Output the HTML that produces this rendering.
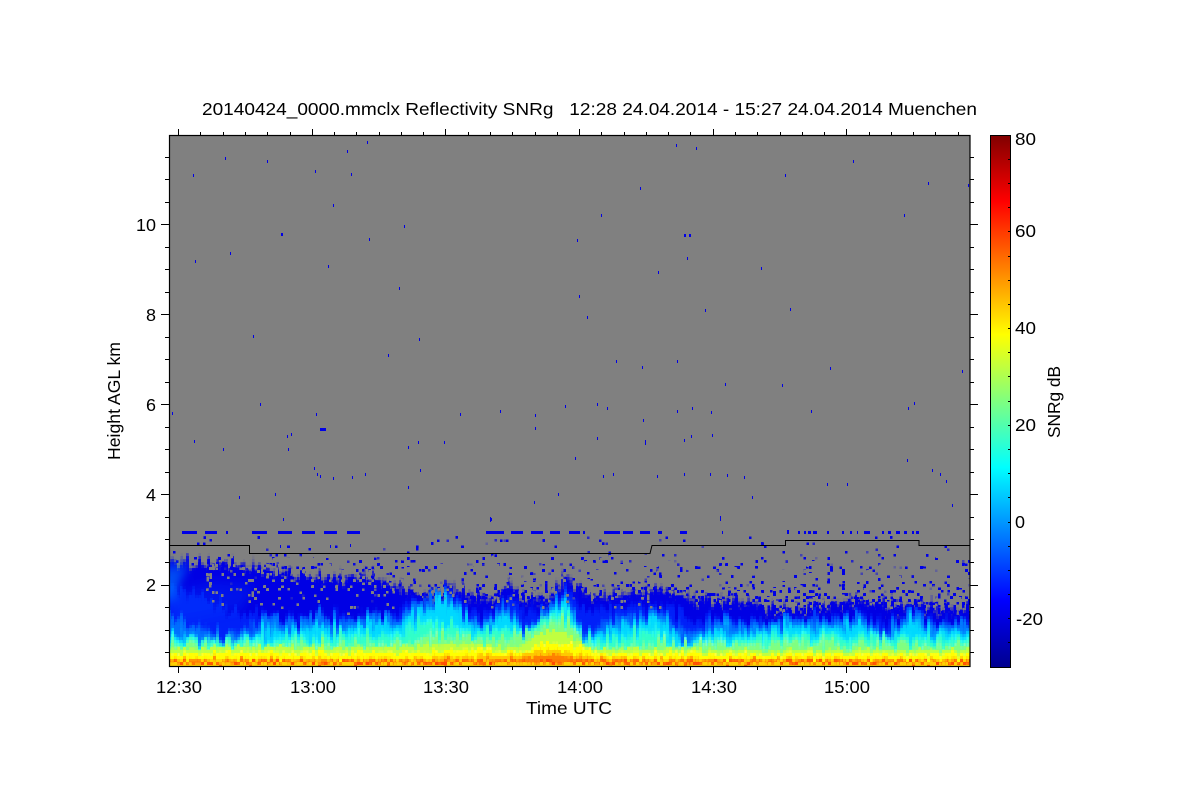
<!DOCTYPE html>
<html><head><meta charset="utf-8"><title>SNRg</title>
<style>
html,body{margin:0;padding:0;background:#fff;width:1200px;height:800px;overflow:hidden}
svg{display:block}
text{font-family:"Liberation Sans",Arial,sans-serif;font-size:17.5px;fill:#000;white-space:pre}
</style></head><body>
<svg width="1200" height="800" viewBox="0 0 1200 800" xmlns="http://www.w3.org/2000/svg">
<defs>
<clipPath id="plot"><rect x="170" y="135" width="800" height="531"/></clipPath>
<linearGradient id="jet" x1="0" y1="667" x2="0" y2="135" gradientUnits="userSpaceOnUse">
<stop offset="0" stop-color="#00008f"/><stop offset=".125" stop-color="#0000ff"/><stop offset=".375" stop-color="#00ffff"/><stop offset=".625" stop-color="#ffff00"/><stop offset=".875" stop-color="#ff0000"/><stop offset="1" stop-color="#800000"/>
</linearGradient>
<linearGradient id="spk" x1="0" y1="535" x2="0" y2="612" gradientUnits="userSpaceOnUse">
<stop offset="0" stop-color="#000" stop-opacity=".23"/><stop offset=".3" stop-color="#000" stop-opacity=".28"/><stop offset=".65" stop-color="#000" stop-opacity=".33"/><stop offset="1" stop-color="#000" stop-opacity=".46"/>
</linearGradient>
<linearGradient id="hole" x1="0" y1="555" x2="0" y2="615" gradientUnits="userSpaceOnUse">
<stop offset="0" stop-color="#000" stop-opacity=".38"/><stop offset=".6" stop-color="#000" stop-opacity=".33"/><stop offset="1" stop-color="#000" stop-opacity=".2"/>
</linearGradient>
<filter id="upper" filterUnits="userSpaceOnUse" x="150" y="535" width="840" height="160" color-interpolation-filters="sRGB">
<feGaussianBlur in="SourceGraphic" stdDeviation="1 2" result="b"/>
<feTurbulence type="fractalNoise" baseFrequency=".36 .035" numOctaves="2" seed="7"/>
<feColorMatrix values="0 0 0 0 .5  0 1.7 0 0 -.35  0 0 0 0 0  0 0 0 0 1" result="n"/>
<feDisplacementMap in="b" in2="n" scale="20" xChannelSelector="R" yChannelSelector="G" result="d"/>
<feFlood x="151" y="536" width="1" height="1" flood-color="#000"/>
<feComposite x="150" y="535" width="3" height="3"/>
<feTile result="t"/>
<feComposite in="d" in2="t" operator="in"/>
<feMorphology operator="dilate" radius="1"/>
</filter>
<filter id="lower" filterUnits="userSpaceOnUse" x="150" y="620" width="840" height="75" color-interpolation-filters="sRGB">
<feGaussianBlur in="SourceGraphic" stdDeviation="1 .6" result="b"/>
<feTurbulence type="fractalNoise" baseFrequency=".3 .05" numOctaves="2" seed="12"/>
<feColorMatrix values="0 0 0 0 .5  0 2 0 0 -.5  0 0 0 0 0  0 0 0 0 1" result="n"/>
<feDisplacementMap in="b" in2="n" scale="7" xChannelSelector="R" yChannelSelector="G" result="d"/>
<feFlood x="151" y="621" width="1" height="1" flood-color="#000"/>
<feComposite x="150" y="620" width="3" height="3"/>
<feTile result="t"/>
<feComposite in="d" in2="t" operator="in"/>
<feMorphology operator="dilate" radius="1"/>
</filter>
<filter id="speck" filterUnits="userSpaceOnUse" x="170" y="536" width="800" height="80" color-interpolation-filters="sRGB">
<feTurbulence type="fractalNoise" baseFrequency=".42 .3" numOctaves="2" seed="4"/>
<feColorMatrix values="0 0 0 0 0  0 0 0 0 0  0 0 0 0 0  0 1 0 0 0" result="a"/>
<feComposite in="SourceAlpha" in2="a" operator="arithmetic" k1="0" k2="1" k3="1" k4="-1"/>
<feComponentTransfer result="m"><feFuncA type="linear" slope="60" intercept="0"/></feComponentTransfer>
<feFlood flood-color="#0000e6"/>
<feComposite in2="m" operator="in" result="c"/>
<feFlood x="171" y="537" width="1" height="1" flood-color="#000"/>
<feComposite x="170" y="536" width="3" height="3"/>
<feTile result="t"/>
<feComposite in="c" in2="t" operator="in"/>
<feMorphology operator="dilate" radius="1"/>
</filter>
<filter id="holes" filterUnits="userSpaceOnUse" x="170" y="555" width="800" height="60" color-interpolation-filters="sRGB">
<feTurbulence type="fractalNoise" baseFrequency=".42 .3" numOctaves="2" seed="21"/>
<feColorMatrix values="0 0 0 0 0  0 0 0 0 0  0 0 0 0 0  0 1 0 0 0" result="a"/>
<feComposite in="SourceAlpha" in2="a" operator="arithmetic" k1="0" k2="1" k3="1" k4="-1"/>
<feComponentTransfer result="m"><feFuncA type="linear" slope="60" intercept="0"/></feComponentTransfer>
<feFlood flood-color="#808080"/>
<feComposite in2="m" operator="in" result="c"/>
<feFlood x="171" y="556" width="1" height="1" flood-color="#000"/>
<feComposite x="170" y="555" width="3" height="3"/>
<feTile result="t"/>
<feComposite in="c" in2="t" operator="in"/>
<feMorphology operator="dilate" radius="1"/>
</filter>
<filter id="soft" filterUnits="userSpaceOnUse" x="150" y="540" width="200" height="110"><feGaussianBlur stdDeviation="4 6"/></filter>
</defs>

<rect width="1200" height="800" fill="#fff"/>
<rect x="170" y="135" width="800" height="531" fill="#808080"/>

<g clip-path="url(#plot)">
<rect x="170" y="536" width="800" height="80" fill="url(#spk)" filter="url(#speck)"/>

<g filter="url(#upper)">
<path fill="#0000e4" d="M150 562L190 564L220 562L250 566L280 573L310 577L340 579L370 576L390 582L405 592L430 597L450 586L465 594L490 602L510 582L525 600L550 599L565 578L580 592L600 599L640 592L670 591L690 600L720 602L750 604L770 610L800 609L850 602L880 607L920 607L990 612V695H150Z"/>
<path fill="#0020f8" d="M150 578L190 592L240 614L300 620L340 614L390 617L405 603L425 603L450 591L465 606L490 614L510 595L525 610L548 606L565 587L582 608L610 610L640 606L670 609L690 620L730 618L760 624L790 617L830 619L860 614L885 626L910 612L940 624L990 622V695H150Z"/>
<path fill="#0070ff" d="M150 612L200 628L225 636L250 628L270 620L300 624L320 614L340 622L370 610L395 620L420 605L440 592L455 604L470 618L490 622L505 600L525 628L545 608L565 594L585 634L610 622L640 616L660 612L685 634L720 622L760 626L790 618L830 622L860 616L885 634L910 612L930 626L990 620V695H150Z"/>
<path fill="#00d8ff" d="M150 630L200 638L220 646L240 638L270 628L300 632L320 624L340 632L370 620L395 628L420 614L440 598L455 610L470 624L490 628L505 608L525 634L545 614L565 602L585 640L610 628L640 624L660 620L685 640L720 630L760 632L790 626L830 628L860 624L885 640L910 620L930 632L990 628V695H150Z"/>
<path fill="#30ffc8" d="M150 640L300 638L345 636L400 634L430 620L470 632L500 630L530 632L545 614L568 614L585 644L650 630L680 644L760 636L850 636L990 638V695H150Z"/>
<path fill="#80ff80" d="M150 647L400 645L440 637L500 641L535 633L552 619L570 625L590 649L660 643L990 646V695H150Z"/>
</g>

<!-- lighter blue patch on the left edge -->
<g filter="url(#soft)">
<path fill="#0080ff" fill-opacity=".6" d="M160 566H190L180 580L175 600H160Z"/>
<path fill="#0040ff" fill-opacity=".28" d="M176 592L215 582L255 586L240 610L200 618L176 622Z"/>
</g>

<rect x="205" y="555" width="765" height="60" fill="url(#hole)" filter="url(#holes)"/>

<g filter="url(#lower)">
<path fill="#c0ff40" d="M150 648L400 648L450 644L520 648L540 632L565 632L590 650L990 650V695H150Z"/>
<path fill="#ffff00" d="M150 653L420 653L470 650L525 652L540 644L570 644L600 654L990 654V695H150Z"/>
<path fill="#ffc800" d="M150 658L420 658L470 656L520 654L535 650L565 650L590 656L640 658L990 658.5V695H150Z"/>
<path fill="#ff8000" d="M150 660L420 660L510 659.5L535 655L565 655L590 659.5L990 660.5V695H150Z"/>
<path fill="#ff4a00" d="M150 661L990 661V663.5H150Z"/>
<path fill="#ffd000" d="M150 663.5H990V695H150Z"/>
</g>

<!-- repeating streak band -->
<path fill="#0000e6" d="M182 531h15v3h-15zM205 531h12v3h-12zM226 531h2v3h-2zM252 531h15v3h-15zM278 531h14v3h-14zM302 531h13v3h-13zM324 531h13v3h-13zM347 531h13v3h-13zM486 531h18v3h-18zM511 531h12v3h-12zM531 531h12v3h-12zM550 531h10v3h-10zM569 531h11v3h-11zM583 531h2v3h-2zM604 531h16v3h-16zM623 531h10v3h-10zM640 531h10v3h-10zM658 531h4v3h-4zM680 531h7v3h-7zM722 531h1v3h-1zM787 530h2v4h-2zM798 531h2v3h-2zM804 531h2v3h-2zM808 531h3v3h-3zM813 531h4v3h-4zM827 531h2v3h-2zM842 531h2v3h-2zM850 531h2v3h-2zM857 531h1v3h-1zM864 531h6v3h-6zM882 531h2v3h-2zM888 531h3v3h-3zM896 531h4v3h-4zM904 531h3v3h-3zM912 531h2v3h-2zM916 531h3v3h-3z"/>

<!-- scattered noise returns -->
<path fill="#0000e6" d="M193 174h1v3h-1zM225 157h1v3h-1zM267 160h1v3h-1zM315 170h1v3h-1zM347 150h1v3h-1zM351 173h1v3h-1zM367 141h1v3h-1zM333 204h1v3h-1zM195 260h1v3h-1zM230 252h1v3h-1zM281 233h2v3h-2zM328 265h1v3h-1zM369 238h1v3h-1zM404 225h1v3h-1zM399 287h1v3h-1zM253 335h1v3h-1zM419 338h1v3h-1zM388 354h1v3h-1zM172 412h1v3h-1zM260 403h1v3h-1zM316 413h1v3h-1zM194 440h1v3h-1zM223 448h1v3h-1zM287 435h1v3h-1zM291 433h1v3h-1zM320 428h6v3h-6zM288 448h1v3h-1zM314 467h1v3h-1zM317 473h1v3h-1zM320 475h1v3h-1zM333 477h1v3h-1zM352 476h1v3h-1zM365 473h1v3h-1zM239 496h1v3h-1zM275 493h1v3h-1zM283 518h1v3h-1zM418 441h1v3h-1zM408 446h1v3h-1zM444 441h1v3h-1zM460 413h1v3h-1zM500 410h1v3h-1zM535 427h1v3h-1zM535 414h1v3h-1zM565 405h1v3h-1zM597 403h1v3h-1zM607 407h1v3h-1zM597 437h1v3h-1zM575 457h1v3h-1zM558 493h1v3h-1zM534 501h1v3h-1zM408 486h1v3h-1zM420 469h1v3h-1zM491 518h1v3h-1zM603 475h1v3h-1zM613 473h1v3h-1zM645 440h1v5h-1zM643 419h1v3h-1zM642 366h1v3h-1zM616 360h1v3h-1zM677 360h1v3h-1zM684 439h1v3h-1zM691 435h1v3h-1zM712 434h1v3h-1zM725 383h1v3h-1zM677 410h1v3h-1zM692 407h1v3h-1zM711 411h1v3h-1zM657 475h1v3h-1zM684 473h1v3h-1zM710 473h1v3h-1zM727 474h1v3h-1zM744 476h1v3h-1zM752 496h1v3h-1zM720 518h1v3h-1zM705 309h1v3h-1zM658 271h1v3h-1zM684 234h2v3h-2zM689 234h2v3h-2zM687 257h1v3h-1zM577 239h1v3h-1zM601 214h1v3h-1zM579 295h1v3h-1zM587 316h1v3h-1zM640 187h1v3h-1zM676 144h1v3h-1zM696 147h1v3h-1zM785 174h1v3h-1zM853 160h1v3h-1zM928 182h1v3h-1zM968 184h1v3h-1zM904 214h1v3h-1zM761 267h1v3h-1zM790 308h1v3h-1zM830 367h1v3h-1zM782 384h1v3h-1zM811 410h1v3h-1zM908 407h1v3h-1zM914 402h1v3h-1zM907 459h1v3h-1zM932 469h1v3h-1zM940 473h1v3h-1zM946 480h1v3h-1zM952 504h1v3h-1zM827 483h1v3h-1zM847 483h1v3h-1zM962 370h1v3h-1zM490 517h1v5h-1zM720 516h1v4h-1zM350 544h1v3h-1zM330 545h1v3h-1zM280 545h1v3h-1z"/>

<path d="M170 545.5H249.5V553.5H650L652 545.5H785.5V540.5H919V545.5H970" fill="none" stroke="#000" stroke-width="1"/>
</g>

<!-- plot frame -->
<rect x="169.5" y="135.5" width="800.5" height="531" fill="none" stroke="#000" stroke-width="1.2"/>

<!-- x ticks, bottom (major) -->
<path fill="none" stroke="#000" stroke-width="1" d="M178.5 667v6M312.5 667v6M445.5 667v6M579.5 667v6M713.5 667v6M846.5 667v6M178.5 135v-6M312.5 135v-6M445.5 135v-6M579.5 135v-6M713.5 135v-6M846.5 135v-6"/>
<!-- x ticks minor -->
<path fill="none" stroke="#000" stroke-width="1" d="M200.5 667v3M223.5 667v3M245.5 667v3M267.5 667v3M290.5 667v3M334.5 667v3M356.5 667v3M379.5 667v3M401.5 667v3M423.5 667v3M468.5 667v3M490.5 667v3M512.5 667v3M535.5 667v3M557.5 667v3M601.5 667v3M624.5 667v3M646.5 667v3M668.5 667v3M690.5 667v3M735.5 667v3M757.5 667v3M780.5 667v3M802.5 667v3M824.5 667v3M869.5 667v3M891.5 667v3M913.5 667v3M935.5 667v3M958.5 667v3M200.5 135v-3M223.5 135v-3M245.5 135v-3M267.5 135v-3M290.5 135v-3M334.5 135v-3M356.5 135v-3M379.5 135v-3M401.5 135v-3M423.5 135v-3M468.5 135v-3M490.5 135v-3M512.5 135v-3M535.5 135v-3M557.5 135v-3M601.5 135v-3M624.5 135v-3M646.5 135v-3M668.5 135v-3M690.5 135v-3M735.5 135v-3M757.5 135v-3M780.5 135v-3M802.5 135v-3M824.5 135v-3M869.5 135v-3M891.5 135v-3M913.5 135v-3M935.5 135v-3M958.5 135v-3"/>
<!-- y ticks major -->
<path fill="none" stroke="#000" stroke-width="1" d="M169 224.5h-8M169 314.5h-8M169 404.5h-8M169 494.5h-8M169 585.5h-8M970 224.5h8M970 314.5h8M970 404.5h8M970 494.5h8M970 585.5h8"/>
<!-- y ticks minor -->
<path fill="none" stroke="#000" stroke-width="1" d="M169 157.5h-4M169 179.5h-4M169 202.5h-4M169 247.5h-4M169 269.5h-4M169 292.5h-4M169 337.5h-4M169 359.5h-4M169 382.5h-4M169 427.5h-4M169 449.5h-4M169 472.5h-4M169 517.5h-4M169 539.5h-4M169 562.5h-4M169 607.5h-4M169 630.5h-4M169 652.5h-4M970 157.5h4M970 179.5h4M970 202.5h4M970 247.5h4M970 269.5h4M970 292.5h4M970 337.5h4M970 359.5h4M970 382.5h4M970 427.5h4M970 449.5h4M970 472.5h4M970 517.5h4M970 539.5h4M970 562.5h4M970 607.5h4M970 630.5h4M970 652.5h4"/>

<!-- colour bar -->
<rect x="990" y="135" width="21" height="532" fill="url(#jet)"/>
<rect x="990.5" y="135.5" width="20" height="532" fill="none" stroke="#000" stroke-width="1"/>
<path fill="none" stroke="#000" stroke-width="1" d="M1010 159.5h-2M1010 183.5h-2M1010 207.5h-2M1010 231.5h-2M1010 256.5h-2M1010 280.5h-2M1010 304.5h-2M1010 328.5h-2M1010 352.5h-2M1010 376.5h-2M1010 401.5h-2M1010 425.5h-2M1010 449.5h-2M1010 473.5h-2M1010 497.5h-2M1010 522.5h-2M1010 546.5h-2M1010 570.5h-2M1010 594.5h-2M1010 618.5h-2M1010 642.5h-2"/>

<!-- text -->
<text x="202" y="115" textLength="775" lengthAdjust="spacingAndGlyphs">20140424_0000.mmclx Reflectivity SNRg   12:28 24.04.2014 - 15:27 24.04.2014 Muenchen</text>

<text x="156" y="693" textLength="46" lengthAdjust="spacingAndGlyphs">12:30</text>
<text x="290" y="693" textLength="46" lengthAdjust="spacingAndGlyphs">13:00</text>
<text x="423" y="693" textLength="46" lengthAdjust="spacingAndGlyphs">13:30</text>
<text x="557" y="693" textLength="46" lengthAdjust="spacingAndGlyphs">14:00</text>
<text x="691" y="693" textLength="46" lengthAdjust="spacingAndGlyphs">14:30</text>
<text x="824" y="693" textLength="46" lengthAdjust="spacingAndGlyphs">15:00</text>
<text x="526" y="714" textLength="86" lengthAdjust="spacingAndGlyphs">Time UTC</text>

<text x="136" y="231" textLength="20" lengthAdjust="spacingAndGlyphs">10</text>
<text x="146" y="321" textLength="10" lengthAdjust="spacingAndGlyphs">8</text>
<text x="146" y="411" textLength="10" lengthAdjust="spacingAndGlyphs">6</text>
<text x="146" y="501" textLength="10" lengthAdjust="spacingAndGlyphs">4</text>
<text x="146" y="591" textLength="10" lengthAdjust="spacingAndGlyphs">2</text>

<text transform="translate(120 460) rotate(-90)" textLength="118" lengthAdjust="spacingAndGlyphs">Height AGL km</text>

<text x="1015" y="145" textLength="21" lengthAdjust="spacingAndGlyphs">80</text>
<text x="1015" y="237" textLength="21" lengthAdjust="spacingAndGlyphs">60</text>
<text x="1015" y="334" textLength="21" lengthAdjust="spacingAndGlyphs">40</text>
<text x="1015" y="431" textLength="21" lengthAdjust="spacingAndGlyphs">20</text>
<text x="1015" y="528" textLength="10" lengthAdjust="spacingAndGlyphs">0</text>
<text x="1016" y="625" textLength="27" lengthAdjust="spacingAndGlyphs">-20</text>
<text transform="translate(1060 438) rotate(-90)" textLength="72" lengthAdjust="spacingAndGlyphs">SNRg dB</text>
</svg>
</body></html>
